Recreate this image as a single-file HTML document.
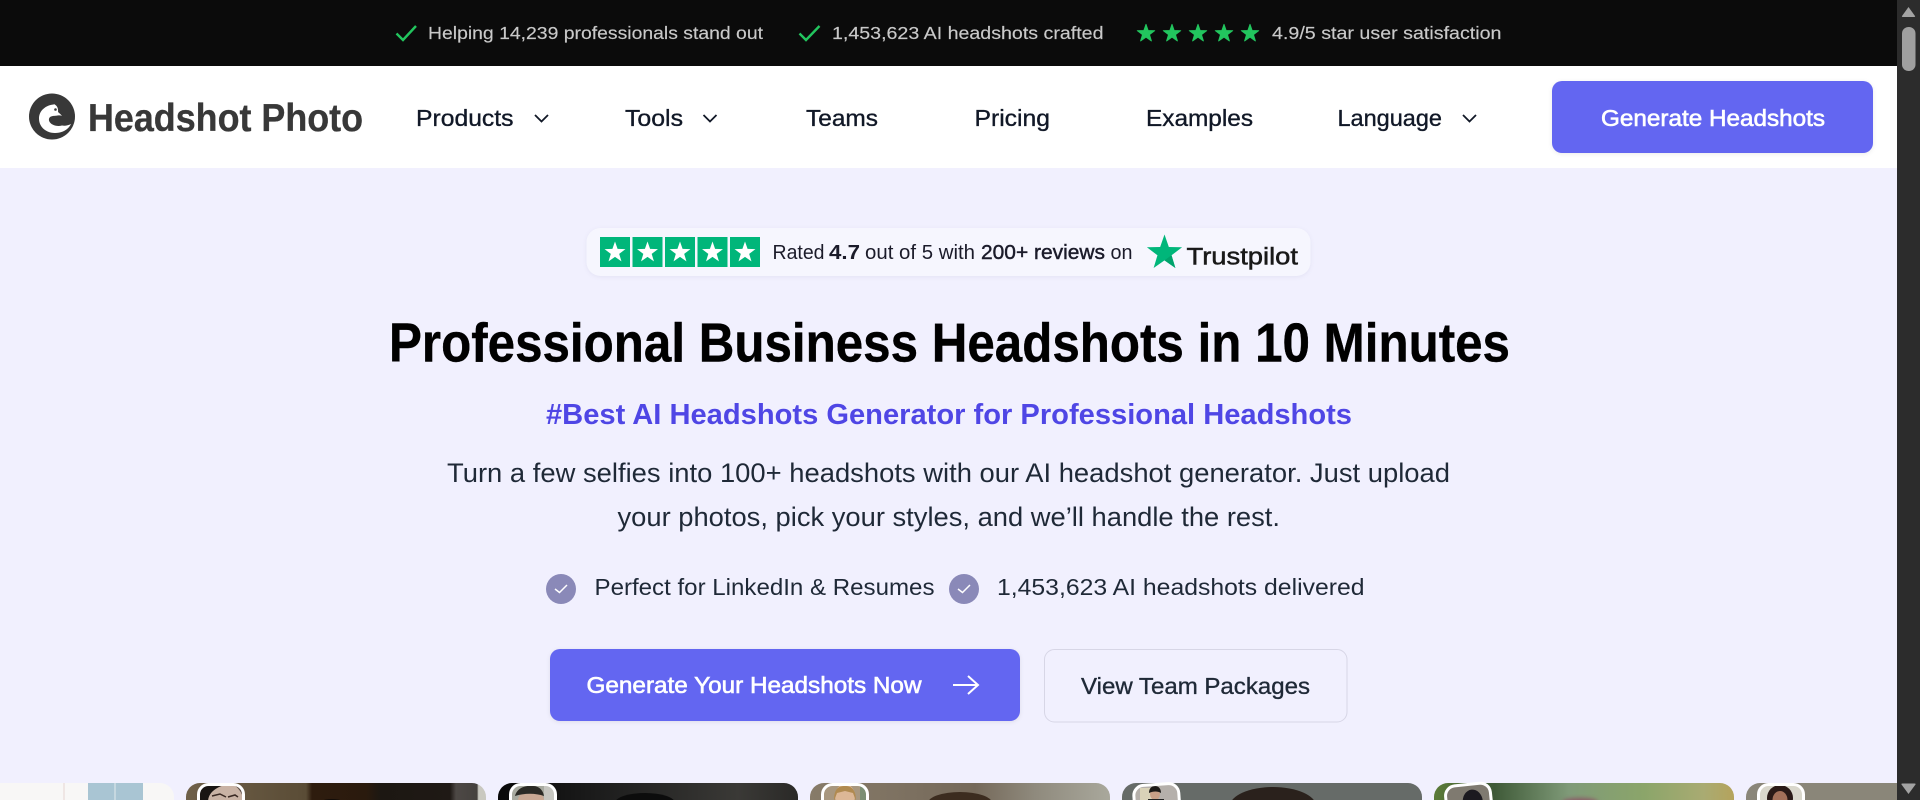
<!DOCTYPE html>
<html lang="en"><head><meta charset="utf-8"><title>Headshot Photo</title>
<style>
html,body{margin:0;padding:0;width:1920px;height:800px;overflow:hidden;background:#f1f0fe}
svg{display:block;font-family:"Liberation Sans",sans-serif}
.t{font-size:17.2px;fill:#c9c9c9;stroke:#c9c9c9;stroke-width:.15}
.n{font-size:23px;fill:#111827;stroke:#111827;stroke-width:.35}
.b{font-size:23px;fill:#fff;stroke:#fff;stroke-width:.6}
.p{font-size:26.5px;fill:#1f2937}
.f{font-size:23px;fill:#1f2937}
.s{font-size:20.5px;fill:#1b1b2a}
.sb{font-size:20.5px;fill:#1b1b2a;stroke:#1b1b2a;stroke-width:.45}
</style></head><body>
<svg width="1920" height="800" viewBox="0 0 1920 800" xmlns="http://www.w3.org/2000/svg">
<defs>
<linearGradient id="c2"><stop offset="0" stop-color="#6f6049"/><stop offset=".4" stop-color="#5a4c36"/><stop offset=".42" stop-color="#2e1c0e"/><stop offset=".6" stop-color="#2a1a0d"/><stop offset=".65" stop-color="#1c1712"/><stop offset=".88" stop-color="#1f1915"/><stop offset=".9" stop-color="#4d4845"/><stop offset=".97" stop-color="#45413e"/><stop offset=".975" stop-color="#c9c8c0"/></linearGradient>
<linearGradient id="c3"><stop offset="0" stop-color="#080808"/><stop offset=".3" stop-color="#1a1a1a"/><stop offset=".8" stop-color="#3a3936"/><stop offset="1" stop-color="#2a2927"/></linearGradient>
<linearGradient id="c4"><stop offset="0" stop-color="#877b69"/><stop offset=".55" stop-color="#75695a"/><stop offset=".75" stop-color="#8f8a7d"/><stop offset="1" stop-color="#a9a89c"/></linearGradient>
<linearGradient id="c6"><stop offset="0" stop-color="#5b7b38"/><stop offset=".2" stop-color="#3f5a38"/><stop offset=".45" stop-color="#7f9a78"/><stop offset=".7" stop-color="#8ba56a"/><stop offset=".9" stop-color="#a9ab72"/><stop offset="1" stop-color="#b5a35c"/></linearGradient>
<filter id="bl" x="-10%" y="-50%" width="120%" height="200%"><feGaussianBlur stdDeviation="2"/></filter>
<clipPath id="k1"><rect x="-40" y="783" width="214" height="60" rx="14"/></clipPath>
<clipPath id="k2"><rect x="186" y="783" width="300" height="60" rx="14"/></clipPath>
<clipPath id="k3"><rect x="498" y="783" width="300" height="60" rx="14"/></clipPath>
<clipPath id="k4"><rect x="810" y="783" width="300" height="60" rx="14"/></clipPath>
<clipPath id="k5"><rect x="1122" y="783" width="300" height="60" rx="14"/></clipPath>
<clipPath id="k6"><rect x="1434" y="783" width="300" height="60" rx="14"/></clipPath>
<clipPath id="k7"><rect x="1746" y="783" width="300" height="60" rx="14"/></clipPath>
<clipPath id="th2"><rect x="198" y="784" width="46" height="40" rx="10"/></clipPath>
<clipPath id="th3"><rect x="510" y="784" width="46" height="40" rx="10"/></clipPath>
<clipPath id="th4"><rect x="822" y="784" width="46" height="40" rx="10"/></clipPath>
<clipPath id="th5"><rect x="1134" y="784" width="46" height="40" rx="10"/></clipPath>
<clipPath id="th6"><rect x="1446" y="784" width="46" height="40" rx="10"/></clipPath>
<clipPath id="th7"><rect x="1758" y="784" width="46" height="40" rx="10"/></clipPath>
</defs>

<rect width="1920" height="800" fill="#f1f0fe"/>

<!-- top bar -->
<rect width="1920" height="66" fill="#0b0b0b"/>
<polyline points="396.5,33.5 403,40 416,26" fill="none" stroke="#22c55e" stroke-width="2.400"/>
<text class="t" x="428" y="39" textLength="335" lengthAdjust="spacingAndGlyphs">Helping 14,239 professionals stand out</text>
<polyline points="799.5,33.5 806,40 819.5,26" fill="none" stroke="#22c55e" stroke-width="2.400"/>
<text class="t" x="832" y="39" textLength="271.500" lengthAdjust="spacingAndGlyphs">1,453,623 AI headshots crafted</text>
<g fill="#22c55e" stroke="#22c55e" stroke-width="1" stroke-linejoin="round">
<polygon transform="translate(1146 33.500) scale(.92)" points="0,-10 2.35,-3.24 9.51,-3.09 3.8,1.24 5.88,8.09 0,4 -5.88,8.09 -3.8,1.24 -9.51,-3.09 -2.35,-3.24"/>
<polygon transform="translate(1172 33.500) scale(.92)" points="0,-10 2.35,-3.24 9.51,-3.09 3.8,1.24 5.88,8.09 0,4 -5.88,8.09 -3.8,1.24 -9.51,-3.09 -2.35,-3.24"/>
<polygon transform="translate(1198 33.500) scale(.92)" points="0,-10 2.35,-3.24 9.51,-3.09 3.8,1.24 5.88,8.09 0,4 -5.88,8.09 -3.8,1.24 -9.51,-3.09 -2.35,-3.24"/>
<polygon transform="translate(1224 33.500) scale(.92)" points="0,-10 2.35,-3.24 9.51,-3.09 3.8,1.24 5.88,8.09 0,4 -5.88,8.09 -3.8,1.24 -9.51,-3.09 -2.35,-3.24"/>
<polygon transform="translate(1250 33.500) scale(.92)" points="0,-10 2.35,-3.24 9.51,-3.09 3.8,1.24 5.88,8.09 0,4 -5.88,8.09 -3.8,1.24 -9.51,-3.09 -2.35,-3.24"/>
</g>
<text class="t" x="1272" y="39" textLength="229.500" lengthAdjust="spacingAndGlyphs">4.9/5 star user satisfaction</text>

<!-- nav -->
<rect y="66" width="1897" height="102" fill="#fff"/>
<ellipse cx="52" cy="116.500" rx="23" ry="23" fill="#383838"/>
<path d="M54 104.500c-8 .5-15 6-15 14 0 8.500 7 14.500 16 14.500 7 0 13-3 16-9-3 1.500-6 2-9 1.500-4 1-9 .5-12-3-1.800-2.300-1.300-5 1-6 2.500-1 4.500-.5 6.500-1 2-.3 3.500 0 4.500.5-1.500-2-3-3-4-4 .5-3.500-1-7-4.500-8z" fill="#fff"/>
<circle cx="55.500" cy="109.500" r="1.300" fill="#383838"/>
<text x="88" y="131" font-size="38.500" font-weight="700" fill="#383838" stroke="#383838" stroke-width=".3" textLength="275" lengthAdjust="spacingAndGlyphs">Headshot Photo</text>

<text class="n" x="416" y="126" textLength="97.500" lengthAdjust="spacingAndGlyphs">Products</text>
<polyline points="535,115 541.500,121.500 548,115" fill="none" stroke="#111827" stroke-width="1.800"/>
<text class="n" x="625" y="126" textLength="58" lengthAdjust="spacingAndGlyphs">Tools</text>
<polyline points="703.500,115 710,121.500 716.500,115" fill="none" stroke="#111827" stroke-width="1.800"/>
<text class="n" x="806" y="126" textLength="72" lengthAdjust="spacingAndGlyphs">Teams</text>
<text class="n" x="974.500" y="126" textLength="75.500" lengthAdjust="spacingAndGlyphs">Pricing</text>
<text class="n" x="1146" y="126" textLength="107" lengthAdjust="spacingAndGlyphs">Examples</text>
<text class="n" x="1337.500" y="126" textLength="104.500" lengthAdjust="spacingAndGlyphs">Language</text>
<polyline points="1463,115 1469.500,121.500 1476,115" fill="none" stroke="#111827" stroke-width="1.800"/>
<rect x="1552" y="81" width="321" height="72" rx="10" fill="#6366f1" style="filter:drop-shadow(0 1px 2px rgba(0,0,0,.08))"/>
<text class="b" x="1601" y="126" textLength="224" lengthAdjust="spacingAndGlyphs">Generate Headshots</text>

<!-- trustpilot -->
<rect x="586.500" y="228" width="724" height="48" rx="14" fill="#f6f6fe" style="filter:drop-shadow(0 1px 2px rgba(60,60,120,.07))"/>
<g fill="#00b67a">
<rect x="600" y="237" width="30" height="30"/><rect x="632.500" y="237" width="30" height="30"/><rect x="665" y="237" width="30" height="30"/><rect x="697.500" y="237" width="30" height="30"/><rect x="730" y="237" width="30" height="30"/>
</g>
<g fill="#fff">
<polygon transform="translate(615 252.500) scale(1.100)" points="0,-10 2.35,-3.24 9.51,-3.09 3.8,1.24 5.88,8.09 0,4 -5.88,8.09 -3.8,1.24 -9.51,-3.09 -2.35,-3.24"/>
<polygon transform="translate(647.500 252.500) scale(1.100)" points="0,-10 2.35,-3.24 9.51,-3.09 3.8,1.24 5.88,8.09 0,4 -5.88,8.09 -3.8,1.24 -9.51,-3.09 -2.35,-3.24"/>
<polygon transform="translate(680 252.500) scale(1.100)" points="0,-10 2.35,-3.24 9.51,-3.09 3.8,1.24 5.88,8.09 0,4 -5.88,8.09 -3.8,1.24 -9.51,-3.09 -2.35,-3.24"/>
<polygon transform="translate(712.500 252.500) scale(1.100)" points="0,-10 2.35,-3.24 9.51,-3.09 3.8,1.24 5.88,8.09 0,4 -5.88,8.09 -3.8,1.24 -9.51,-3.09 -2.35,-3.24"/>
<polygon transform="translate(745 252.500) scale(1.100)" points="0,-10 2.35,-3.24 9.51,-3.09 3.8,1.24 5.88,8.09 0,4 -5.88,8.09 -3.8,1.24 -9.51,-3.09 -2.35,-3.24"/>
</g>
<text class="s" x="772.500" y="259" textLength="52" lengthAdjust="spacingAndGlyphs">Rated</text>
<text class="s" x="829" y="259" font-weight="700" textLength="31" lengthAdjust="spacingAndGlyphs">4.7</text>
<text class="s" x="865" y="259" textLength="110" lengthAdjust="spacingAndGlyphs">out of 5 with</text>
<text class="sb" x="981" y="259" textLength="124" lengthAdjust="spacingAndGlyphs">200+ reviews</text>
<text class="s" x="1110.500" y="259" textLength="22" lengthAdjust="spacingAndGlyphs">on</text>
<polygon transform="translate(1164.500 253) scale(1.850)" fill="#00b67a" points="0,-10 2.35,-3.24 9.51,-3.09 3.8,1.24 5.88,8.09 0,4 -5.88,8.09 -3.8,1.24 -9.51,-3.09 -2.35,-3.24"/>
<polygon transform="translate(1164.500 253) scale(1.850)" fill="#00a36c" points="0,4 3.1,1.7 3.8,1.24 5.88,8.09"/>
<text x="1186.500" y="264.500" font-size="24.500" fill="#191919" stroke="#191919" stroke-width=".5" textLength="111.500" lengthAdjust="spacingAndGlyphs">Trustpilot</text>

<!-- hero text -->
<text x="389" y="361.500" font-size="54.500" font-weight="700" fill="#000" stroke="#000" stroke-width=".4" textLength="1121" lengthAdjust="spacingAndGlyphs">Professional Business Headshots in 10 Minutes</text>
<text x="546" y="424" font-size="28.500" font-weight="700" fill="#4f46e5" textLength="806" lengthAdjust="spacingAndGlyphs">#Best AI Headshots Generator for Professional Headshots</text>
<text class="p" x="447" y="482" textLength="1003" lengthAdjust="spacingAndGlyphs">Turn a few selfies into 100+ headshots with our AI headshot generator. Just upload</text>
<text class="p" x="617.500" y="526" textLength="662.500" lengthAdjust="spacingAndGlyphs">your photos, pick your styles, and we’ll handle the rest.</text>

<!-- features -->
<circle cx="561" cy="589" r="15" fill="#8a89b8"/>
<polyline points="555,589 559.500,592.500 567,585" fill="none" stroke="#fff" stroke-width="1.500"/>
<text class="f" x="594.500" y="595" textLength="340" lengthAdjust="spacingAndGlyphs">Perfect for LinkedIn &amp; Resumes</text>
<circle cx="964" cy="589" r="15" fill="#8a89b8"/>
<polyline points="958,589 962.500,592.500 970,585" fill="none" stroke="#fff" stroke-width="1.500"/>
<text class="f" x="997" y="595" textLength="367.500" lengthAdjust="spacingAndGlyphs">1,453,623 AI headshots delivered</text>

<!-- buttons -->
<rect x="550" y="649" width="470" height="72" rx="10" fill="#6366f1" style="filter:drop-shadow(0 1px 2px rgba(0,0,0,.08))"/>
<text class="b" x="586.500" y="693" textLength="335" lengthAdjust="spacingAndGlyphs">Generate Your Headshots Now</text>
<path d="M953 685H977M968 676l10 9-10 9" fill="none" stroke="#fff" stroke-width="2"/>
<rect x="1044.500" y="649.500" width="302.500" height="72.500" rx="10" fill="#f1f0fe" stroke="#d7d6e6" stroke-width="1"/>
<text class="n" x="1081" y="694" style="fill:#1f2937;stroke:#1f2937" textLength="229" lengthAdjust="spacingAndGlyphs">View Team Packages</text>

<!-- cards -->
<g clip-path="url(#k1)"><rect x="0" y="783" width="174" height="17" fill="#f8f7f6"/><rect x="88" y="783" width="55" height="17" fill="#a9c5d3"/><rect x="114" y="783" width="2" height="17" fill="#c6d8e0"/><rect x="63" y="783" width="2" height="17" fill="#efe6e4"/></g>

<g clip-path="url(#k2)"><rect x="186" y="783" width="300" height="17" fill="url(#c2)"/><ellipse cx="332" cy="806" rx="16" ry="7" fill="#120c08"/></g>
<g clip-path="url(#th2)"><rect x="198" y="784" width="46" height="17" fill="#c9b3a5"/><path d="M198 784h30c-12 3-19 8-20 17h-10z" fill="#191513"/><path d="M232 784c6 3 10 8 12 17v-17z" fill="#5a4c44"/><path d="M212 796l8-2 6 3M228 797l7-2 3 2" fill="none" stroke="#3a2a24" stroke-width="1.500"/></g>
<rect x="198.500" y="784.500" width="45" height="40" rx="10" fill="none" stroke="#fff" stroke-width="3"/>

<g clip-path="url(#k3)"><rect x="498" y="783" width="300" height="17" fill="url(#c3)"/><ellipse cx="645" cy="803" rx="30" ry="10" fill="#0c0c0c"/></g>
<g clip-path="url(#th3)"><rect x="510" y="784" width="46" height="17" fill="#a8aaa0"/><rect x="544" y="786" width="12" height="15" fill="#c6c6c0"/><ellipse cx="531" cy="800" rx="13" ry="9" fill="#c9a893"/><path d="M515 796c2-8 10-11 18-10 6 0 10 4 11 10-8-3-20-3-29 0z" fill="#2b2a25"/></g>
<rect x="510.500" y="784.500" width="45" height="40" rx="10" fill="none" stroke="#fff" stroke-width="3"/>

<g clip-path="url(#k4)"><rect x="810" y="783" width="300" height="17" fill="url(#c4)"/><ellipse cx="960" cy="803" rx="32" ry="11" fill="#3c2c1f"/></g>
<g clip-path="url(#th4)"><rect x="822" y="784" width="46" height="17" fill="#a8977f"/><rect x="860" y="784" width="8" height="17" fill="#7c8f74"/><ellipse cx="845" cy="796" rx="10" ry="12" fill="#dcb796"/><path d="M834 801c0-12 4-15 11-15s11 4 11 15l-3-8-8-2-8 2z" fill="#b08a50"/></g>
<rect x="822.500" y="784.500" width="45" height="40" rx="10" fill="none" stroke="#fff" stroke-width="3"/>

<g clip-path="url(#k5)"><rect x="1122" y="783" width="300" height="17" fill="#666b68"/><ellipse cx="1273" cy="806" rx="43" ry="19" fill="#2a211c"/></g>
<g clip-path="url(#th5)"><rect x="1134" y="780" width="46" height="21" fill="#b5b0ab"/><rect x="1140" y="788" width="14" height="13" fill="#d9d2b8"/><ellipse cx="1155" cy="794" rx="5" ry="6" fill="#c89f87"/><path d="M1149 793c0-5 3-7 6-7s6 2 6 7c-3-2-8-2-12 0z" fill="#1d1a18"/><rect x="1148" y="799" width="16" height="3" fill="#222"/></g>
<rect x="1134.500" y="784.500" width="45" height="40" rx="10" fill="none" stroke="#fff" stroke-width="3" transform="rotate(-4 1157 804)"/>

<g clip-path="url(#k6)"><rect x="1434" y="783" width="300" height="17" fill="url(#c6)"/><ellipse cx="1580" cy="802" rx="18" ry="4" fill="#8a5a66" filter="url(#bl)"/></g>
<g transform="rotate(-6 1469 804)"><rect x="1446.500" y="784.500" width="45" height="40" rx="10" fill="#7f7a70" stroke="#fff" stroke-width="3"/><ellipse cx="1473" cy="802" rx="10" ry="12" fill="#1c1a20"/></g>

<g clip-path="url(#k7)"><rect x="1746" y="783" width="151" height="17" fill="#8a8679"/></g>
<g clip-path="url(#th7)"><rect x="1758" y="784" width="46" height="17" fill="#d9d7cc"/><ellipse cx="1780" cy="798" rx="13" ry="13" fill="#2a1a18"/><ellipse cx="1780" cy="800" rx="7.500" ry="9" fill="#a3705a"/></g>
<rect x="1758.500" y="784.500" width="45" height="40" rx="10" fill="none" stroke="#fff" stroke-width="3"/>

<!-- scrollbar -->
<rect x="1897" y="0" width="23" height="800" fill="#2c2c2c"/>
<path d="M1908.500 7 L1915 16 Q1915.500 17 1914 17 H1903 Q1901.500 17 1902 16Z" fill="#a3a3a3"/>
<rect x="1902" y="27" width="13.500" height="44" rx="6.500" fill="#9f9f9f"/>
<path d="M1908.500 794 L1915.500 784.500 Q1916 783.500 1914.500 783.500 H1902.500 Q1901 783.500 1901.500 784.500Z" fill="#a3a3a3"/>
</svg>
</body></html>
